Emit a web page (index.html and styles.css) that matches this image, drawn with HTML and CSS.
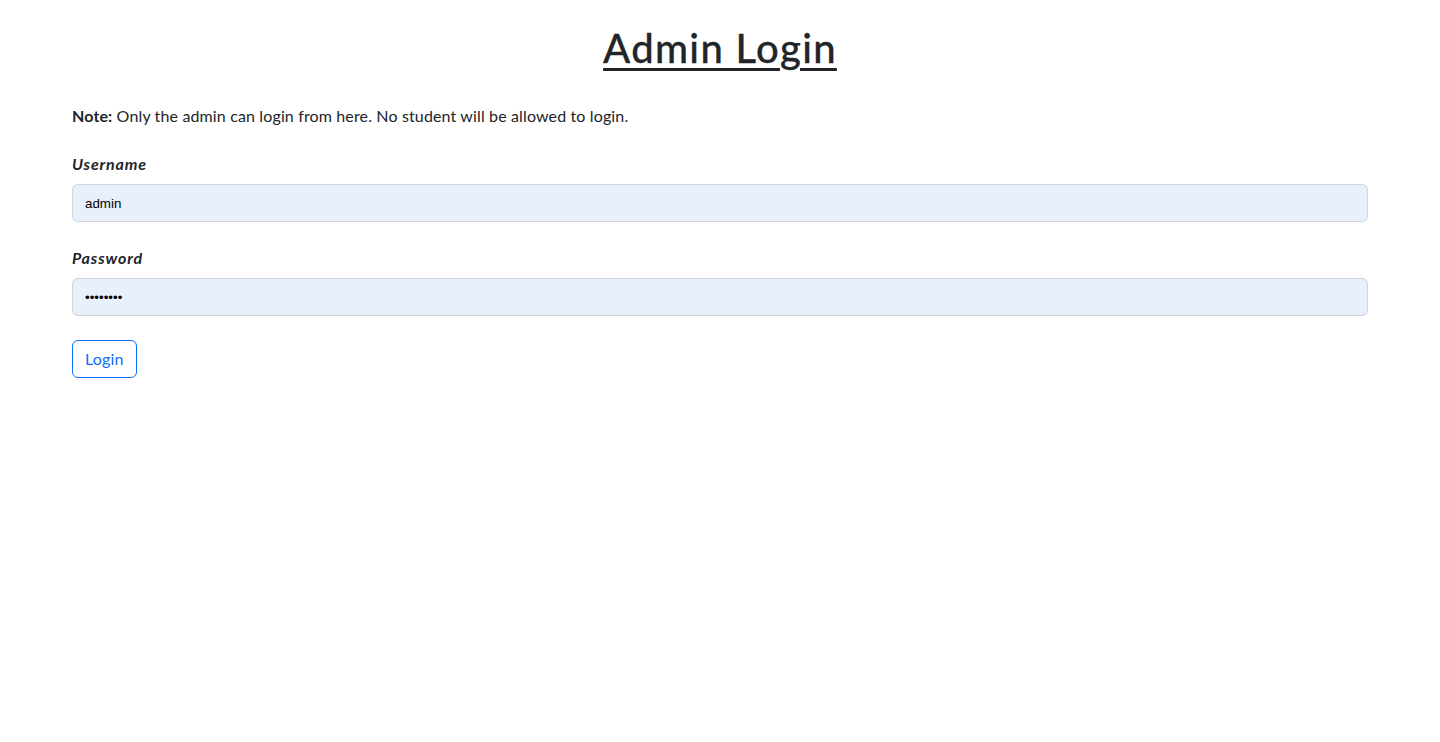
FILE: index.html
```html
<!DOCTYPE html>
<html lang="en">
<head>
<meta charset="utf-8">
<title>Admin Login</title>
<link rel="stylesheet" href="styles.css">
</head>
<body>
<div class="container">
  <h1 class="title">Admin Login</h1>
  <p class="note"><b>Note:</b> Only the admin can login from here. No student will be allowed to login.</p>
  <form class="form">
    <div class="field">
      <label class="label" for="username">Username</label>
      <input class="input" id="username" type="text" value="admin">
    </div>
    <div class="field">
      <label class="label" for="password">Password</label>
      <input class="input" id="password" type="password" value="password">
    </div>
    <button class="btn" type="button">Login</button>
  </form>
</div>
</body>
</html>
```

FILE: styles.css
```css
* { box-sizing: border-box; }
html, body { margin: 0; padding: 0; background: #fff; }
body {
  font-family: Lato, "Segoe UI", "Noto Sans", sans-serif;
  font-size: 16px;
  line-height: 1.5;
  color: #212529;
}
.container {
  width: 1320px;
  margin: 0 auto;
  padding: 0 12px;
}
.title {
  margin: 24px 0 32px;
  font-size: 40px;
  font-weight: 500;
  line-height: 1.2;
  letter-spacing: 1.3px;
  text-align: center;
  text-decoration: underline;
  text-decoration-thickness: 3px;
  text-underline-offset: 5px;
  -webkit-text-stroke: 0.3px #212529;
}
.note {
  margin: 0 0 24px;
  letter-spacing: 0.14px;
}
.note b { font-weight: 700; }
.field {
  display: flex;
  flex-direction: column;
  margin-bottom: 24px;
}
.label {
  font-weight: 700;
  font-style: italic;
  letter-spacing: 0.85px;
  margin-bottom: 8px;
}
.input {
  height: 38px;
  padding: 6px 12px;
  border: 1px solid #ced4da;
  border-radius: 6px;
  background: #e8f0fe;
  font-family: "Liberation Sans", Arial, sans-serif;
  font-size: 13.33px;
  color: #000;
  outline: none;
}
.btn {
  height: 38px;
  padding: 6px 12px;
  border: 1px solid #0d6efd;
  border-radius: 6px;
  background: #fff;
  color: #0d6efd;
  font-family: inherit;
  font-size: 16px;
  line-height: 1.5;
  letter-spacing: 0.2px;
  cursor: pointer;
}
```
